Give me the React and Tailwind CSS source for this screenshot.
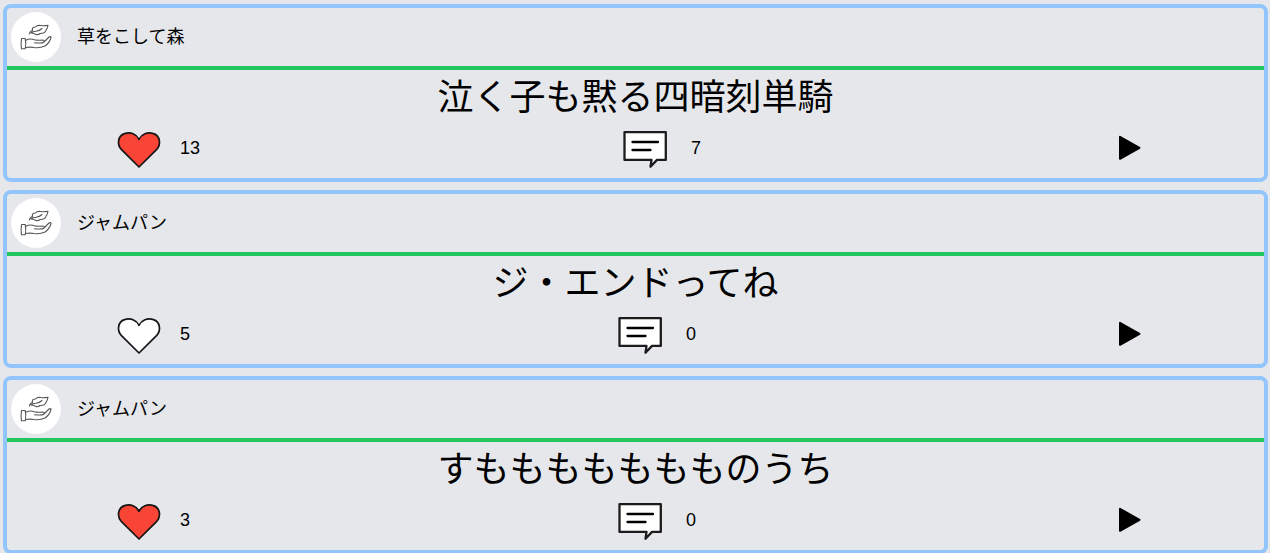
import React from 'react';

const posts = [
  { user: '草をこして森', title: '泣く子も黙る四暗刻単騎', likes: 13, liked: true, comments: 7 },
  { user: 'ジャムパン', title: 'ジ・エンドってね', likes: 5, liked: false, comments: 0 },
  { user: 'ジャムパン', title: `す${'も'.repeat(7)}のうち`, likes: 3, liked: true, comments: 0 },
];

function Avatar() {
  return (
    <svg className="size-[50px] shrink-0 rounded-full bg-white" viewBox="0 0 50 50" fill="none" stroke="#555" strokeWidth="1.1" strokeLinecap="round" strokeLinejoin="round">
      <path d="M10.500 26.500h3.700q1.200 5 0 10.300h-3.700q-.8-5 0-10.300Z" />
      <path d="M14.800 28.200q4.500-2.200 8.500-.5 3 .8 8 .3 2.500 0 1.700 2-1.500 1.500-9.500.8M33 30l5-5q2-1 2 .5-1.200 5-6 8.500-5 2.300-11 1.500-4-.8-8.200 0" />
      <path d="M18.300 22q.7-3 3.200-3.500-1-3.500 3-3.500 1.500-2 5-1.500 4 .5 7.500-.3-.3 2.500-1.800 4.700-1.200 3.800-6.200 3.600-2 2-4.500.7-2.500-1.200-4.500-1.200Q21.500 19.500 25 19.300q3.500-.5 6-2.800" />
    </svg>
  );
}

function Heart({ liked }) {
  return (
    <svg className="size-[50px] shrink-0" viewBox="0 0 50 50" fill={liked ? '#f94536' : '#fff'} stroke="#151515" strokeWidth="1.7" strokeLinejoin="round">
      <path d="M25 43 7.500 25.700C2.500 20.200 4 11.700 10.500 9.600C16.500 7.500 22.500 10.200 25 15.300C27.500 10.200 33.500 7.500 39.500 9.600C46 11.700 47.500 20.200 42.500 25.700Z" />
    </svg>
  );
}

function Comment() {
  return (
    <svg className="size-[50px] shrink-0" viewBox="0 0 50 50" fill="#fff" stroke="#1c1c1c" strokeWidth="2.3" strokeLinejoin="round" strokeLinecap="round">
      <path d="M4.500 8.200H45.800V35.900H37L30.500 42.700 31.500 35.900H4.500Z" />
      <path d="M12.500 18H38M12.500 26H30.500" stroke="#000" />
    </svg>
  );
}

function Play() {
  return (
    <svg className="h-[50px] w-[23px] shrink-0" viewBox="0 0 23 50" fill="#000" stroke="#000" strokeWidth="2" strokeLinejoin="round">
      <path d="M2 12.800 21.500 23.800 2 34.800Z" />
    </svg>
  );
}

function Post({ user, title, likes, liked, comments }) {
  return (
    <article className="h-[178px] shrink-0 rounded-lg border-4 border-[#93c5fd]">
      <header className="flex h-[62px] items-center gap-4 border-b-4 border-[#22c55e] px-1 text-lg">
        <Avatar />
        <span>{user}</span>
      </header>
      <h2 className="flex h-[54px] items-center justify-center pt-0.5 text-4xl font-normal">{title}</h2>
      <div className="flex h-[50px] items-center justify-between pr-[123px] pl-[107px] text-lg">
        <div className="flex items-center gap-4">
          <Heart liked={liked} />
          <span className="-mt-0.5">{likes}</span>
        </div>
        <div className="-mr-[3px] flex items-center gap-[21px]">
          <Comment />
          <span className="-mt-0.5">{comments}</span>
        </div>
        <Play />
      </div>
    </article>
  );
}

export default function App() {
  return (
    <main className="flex h-[553px] flex-col gap-2 overflow-hidden bg-[#e5e7eb] pt-1 pr-0.5 pl-[3px] font-['Liberation_Sans','Noto_Sans_CJK_JP',sans-serif] text-black">
      {posts.map((post, i) => (
        <Post key={i} {...post} />
      ))}
    </main>
  );
}
